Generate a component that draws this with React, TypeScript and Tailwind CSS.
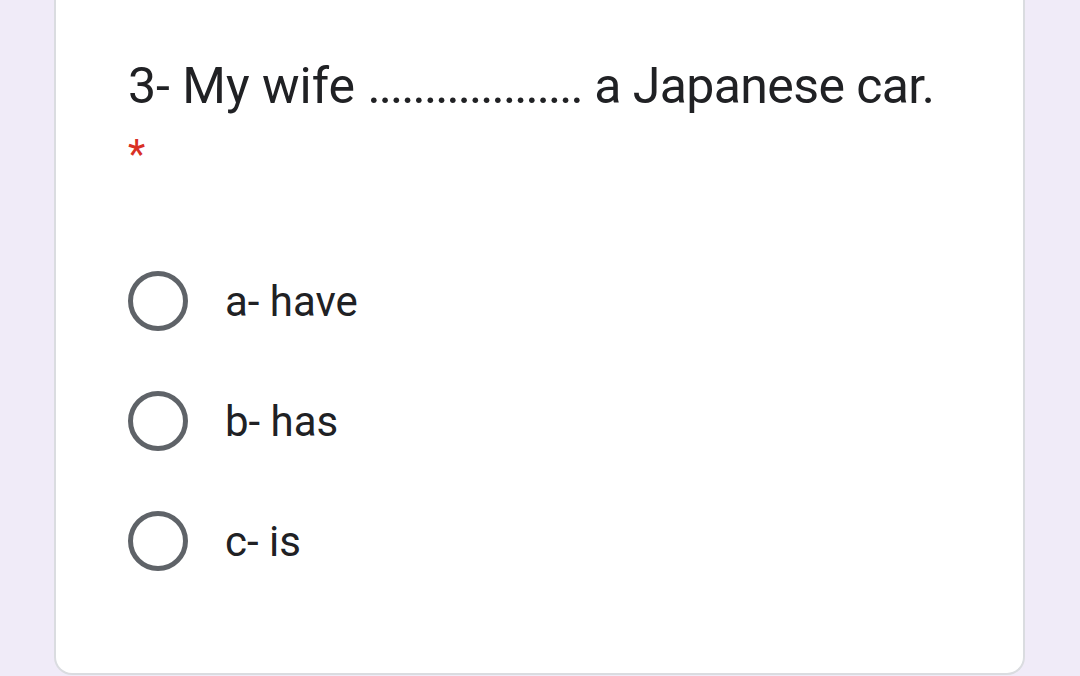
export default function App() {
  const options = ["a- have", "b- has", "c- is"];

  return (
    <div className="h-[676px] w-[1080px] overflow-hidden bg-[#f0ebf8]">
      <div className="ml-[54px] h-[675px] w-[971px] rounded-b-[18px] border-2 border-t-0 border-[#dadce0] bg-white pl-[72px]">
        <div
          className="pt-[53px] text-[#202124]"
          style={{ fontFamily: "Roboto, 'Open Sans', sans-serif" }}
        >
          <div className="text-[50px] leading-[66px]">
            3- My wife <span className="tracking-[-1.9px]">...................</span>{" "}
            <span className="tracking-[-0.6px]">a Japanese car.</span>
          </div>
          <div className="h-[66px] pt-[6px] text-[40px] leading-[60px] text-[#d93025]">*</div>
        </div>

        <div className="mt-[56px]" style={{ fontFamily: "Roboto, sans-serif" }}>
          {options.map((o) => (
            <label key={o} className="flex h-[120px] items-center">
              <span className="h-[60px] w-[60px] shrink-0 rounded-full border-[5px] border-[#5f6368]" />
              <span className="ml-[37px] text-[42px] text-[#202124]">{o}</span>
            </label>
          ))}
        </div>
      </div>
    </div>
  );
}
